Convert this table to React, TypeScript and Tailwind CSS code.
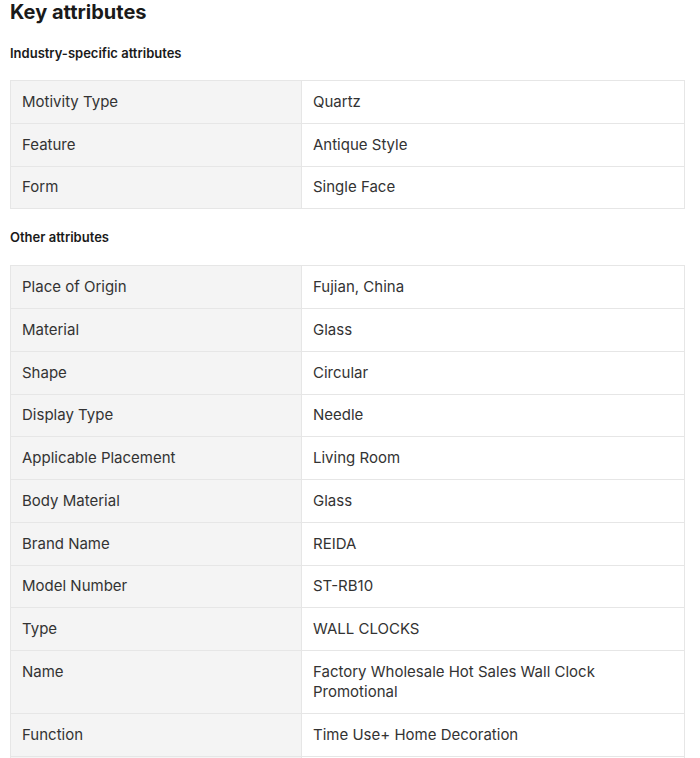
import React from "react";

const industry: [string, string][] = [
  ["Motivity Type", "Quartz"],
  ["Feature", "Antique Style"],
  ["Form", "Single Face"],
];

const other: [string, string][] = [
  ["Place of Origin", "Fujian, China"],
  ["Material", "Glass"],
  ["Shape", "Circular"],
  ["Display Type", "Needle"],
  ["Applicable Placement", "Living Room"],
  ["Body Material", "Glass"],
  ["Brand Name", "REIDA"],
  ["Model Number", "ST-RB10"],
  ["Type", "WALL CLOCKS"],
  ["Name", "Factory Wholesale Hot Sales Wall Clock Promotional"],
  ["Function", "Time Use+ Home Decoration"],
];

function Table({ rows }: { rows: [string, string][] }) {
  return (
    <div className="border-t border-l border-r border-[#e6e6e6]">
      {rows.map(([k, v]) => (
        <div key={k} className="grid grid-cols-[291px_1fr] border-b border-[#e6e6e6]">
          <div className="bg-[#f4f4f4] border-r border-[#e6e6e6] px-[11px] py-[10.75px] leading-[20.25px]">{k}</div>
          <div className="px-[11px] py-[10.75px] leading-[20.25px] pr-[60px]">{v}</div>
        </div>
      ))}
    </div>
  );
}

export default function App() {
  return (
    <div
      className="bg-white h-[758px] overflow-hidden pl-[10px] pr-[15px] text-[#222]"
      style={{ fontFamily: "Inter, 'Noto Sans', sans-serif" }}
    >
      <h1 className="text-[20px] font-bold leading-[24px] text-[#1a1a1a]">Key attributes</h1>
      <h2 className="mt-[19px] text-[13px] font-semibold leading-[20px] text-[#1a1a1a]">Industry-specific attributes</h2>
      <div className="mt-[17px] text-[15px] text-[#333]">
        <Table rows={industry} />
      </div>
      <h2 className="mt-[18px] text-[13px] font-semibold leading-[20px] text-[#1a1a1a]">Other attributes</h2>
      <div className="mt-[18px] text-[15px] text-[#333]">
        <Table rows={other} />
        <div className="grid grid-cols-[291px_1fr] border-l border-r border-[#e6e6e6] h-[10px]">
          <div className="bg-[#f4f4f4] border-r border-[#e6e6e6]"></div>
          <div></div>
        </div>
      </div>
    </div>
  );
}
